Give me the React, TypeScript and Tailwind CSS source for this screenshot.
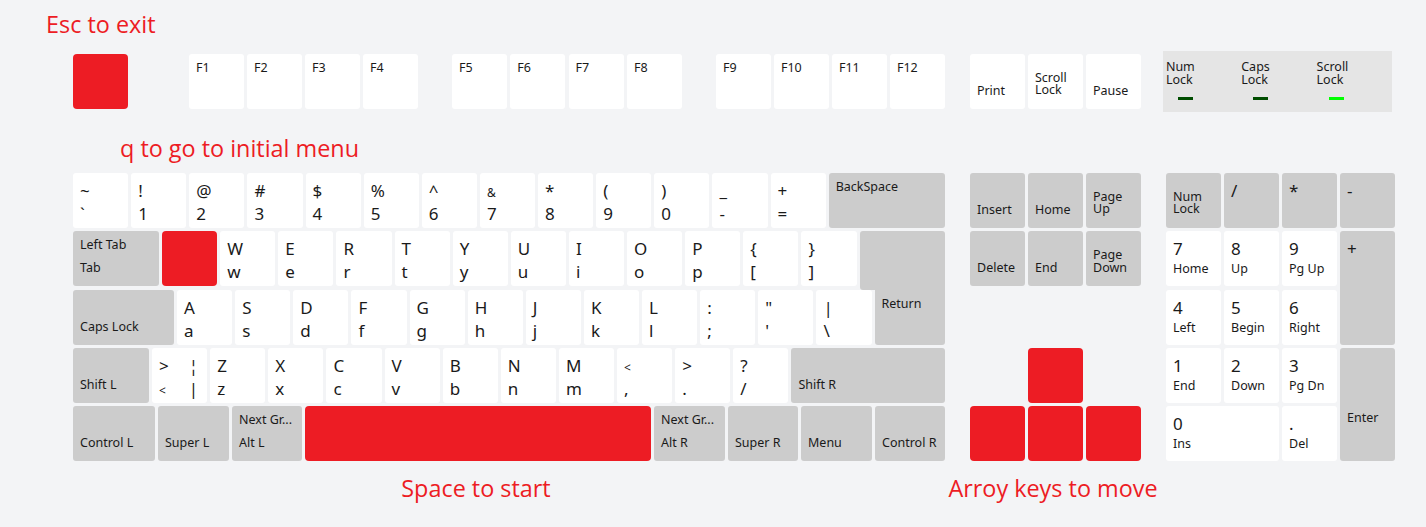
import * as React from "react";

const FONT = "font-['Noto_Sans',sans-serif]";
const WHITE = "rounded-[3px] bg-white";
const GRAY = "rounded-[3px] bg-[#cccccc]";
const RED = "rounded-[4px] bg-[#ed1c24]";

type KeyProps = {
  className?: string;
  children?: React.ReactNode;
};

const Key: React.FC<KeyProps> = ({ className = "", children }) => (
  <div className={`h-[55px] shrink-0 text-[#1a1a1a] ${className}`}>{children}</div>
);

// big two-line legend: shifted symbol on top, base on bottom
const Dual: React.FC<{ top: React.ReactNode; bottom: React.ReactNode }> = ({ top, bottom }) => (
  <div className="flex h-full flex-col justify-between pt-[9px] pb-[6px] pl-[7px] text-[17px] leading-[17px]">
    <span className="h-[17px]">{top}</span>
    <span className="h-[17px]">{bottom}</span>
  </div>
);

// small legends for modifiers
const Mod: React.FC<{ top?: string; bottom?: React.ReactNode }> = ({ top, bottom }) => (
  <div className="flex h-full flex-col justify-between pt-[8px] pb-[12px] pl-[7px] text-[12.5px] leading-[12px]">
    <span className="h-[12px] whitespace-nowrap">{top}</span>
    <span className="whitespace-nowrap">{bottom}</span>
  </div>
);

// numpad: big digit on top, small word below
const Pad: React.FC<{ top: string; bottom?: string }> = ({ top, bottom }) => (
  <div className="flex h-full flex-col justify-between pt-[9px] pb-[11px] pl-[7px]">
    <span className="text-[17px] leading-[17px]">{top}</span>
    <span className="text-[12.5px] leading-[12px]">{bottom}</span>
  </div>
);

const Two: React.FC<{ a: string; b: string }> = ({ a, b }) => (
  <span className="block leading-[12.7px]">
    {a}
    <br />
    {b}
  </span>
);

const Title: React.FC<{ children: React.ReactNode; className?: string }> = ({ children, className = "" }) => (
  <div className={`font-['Open_Sans',sans-serif] text-[23.4px] leading-[24px] whitespace-nowrap text-[#ed1c24] ${className}`}>
    {children}
  </div>
);

const U = "w-[55.13px]";

const numberRow: [React.ReactNode, string][] = [
  ["~", "`"],
  ["!", "1"],
  ["@", "2"],
  ["#", "3"],
  ["$", "4"],
  ["%", "5"],
  ["^", "6"],
  [<span className="text-[12px]">&amp;</span>, "7"],
  ["*", "8"],
  ["(", "9"],
  [")", "0"],
  ["_", "-"],
  ["+", "="],
];

const qRow: [string, string][] = [
  ["W", "w"],
  ["E", "e"],
  ["R", "r"],
  ["T", "t"],
  ["Y", "y"],
  ["U", "u"],
  ["I", "i"],
  ["O", "o"],
  ["P", "p"],
  ["{", "["],
  ["}", "]"],
];

const aRow: [string, string][] = [
  ["A", "a"],
  ["S", "s"],
  ["D", "d"],
  ["F", "f"],
  ["G", "g"],
  ["H", "h"],
  ["J", "j"],
  ["K", "k"],
  ["L", "l"],
  [":", ";"],
  ['"', "'"],
  ["|", "\\"],
];

const zRow: [React.ReactNode, string][] = [
  ["Z", "z"],
  ["X", "x"],
  ["C", "c"],
  ["V", "v"],
  ["B", "b"],
  ["N", "n"],
  ["M", "m"],
  [<span className="text-[12px]">&lt;</span>, ","],
  [">", "."],
  ["?", "/"],
];

const App: React.FC = () => {
  return (
    <div className={`h-[527px] w-[1426px] overflow-hidden bg-[#f3f4f6] ${FONT}`}>
      {/* hint */}
      <div className="h-[54px] pt-[12px] pl-[46px]">
        <Title>Esc to exit</Title>
      </div>

      {/* function row */}
      <div className="flex h-[55px] items-center pl-[73px]">
        <Key className={`w-[55px] ${RED}`} />
        <div className="ml-[61px] flex gap-[3px]">
          {["F1", "F2", "F3", "F4"].map((f) => (
            <Key key={f} className={`w-[55px] ${WHITE}`}>
              <Mod top={f} />
            </Key>
          ))}
        </div>
        <div className="ml-[34px] flex gap-[3.3px]">
          {["F5", "F6", "F7", "F8"].map((f) => (
            <Key key={f} className={`w-[55px] ${WHITE}`}>
              <Mod top={f} />
            </Key>
          ))}
        </div>
        <div className="ml-[34px] flex gap-[3px]">
          {["F9", "F10", "F11", "F12"].map((f) => (
            <Key key={f} className={`w-[55px] ${WHITE}`}>
              <Mod top={f} />
            </Key>
          ))}
        </div>
        <div className="ml-[25px] flex gap-[3px]">
          <Key className={`w-[55px] ${WHITE}`}>
            <Mod bottom="Print" />
          </Key>
          <Key className={`w-[55px] ${WHITE}`}>
            <Mod bottom={<Two a="Scroll" b="Lock" />} />
          </Key>
          <Key className={`w-[55px] ${WHITE}`}>
            <Mod bottom="Pause" />
          </Key>
        </div>
        <div className="ml-[22px] flex h-[61px] w-[229px] bg-[#e5e5e5] pt-[10px] pl-[3px] text-[12.5px] text-[#1a1a1a]">
          {[
            ["Num", "Lock", "bg-[#004d00]"],
            ["Caps", "Lock", "bg-[#004d00]"],
            ["Scroll", "Lock", "bg-[#00ff00]"],
          ].map(([a, b, c]) => (
            <div key={a} className="w-[76.5px]">
              <Two a={a} b={b} />
              <div className={`mt-[10.5px] ml-[12px] h-[3px] w-[15px] ${c}`} />
            </div>
          ))}
        </div>
      </div>

      {/* hint */}
      <div className="h-[64px] pt-[27px] pl-[120px]">
        <Title>q to go to initial menu</Title>
      </div>

      {/* keyboard body */}
      <div className="flex pl-[73px]">
        {/* main block */}
        <div className="flex w-[872px] flex-col gap-[3.25px]">
          <div className="flex gap-[3px]">
            {numberRow.map(([t, b], i) => (
              <Key key={i} className={`${U} ${WHITE}`}>
                <Dual top={t} bottom={b} />
              </Key>
            ))}
            <Key className={`w-[116px] ${GRAY}`}>
              <Mod top="BackSpace" />
            </Key>
          </div>

          <div className="flex items-start gap-[3px]">
            <Key className={`w-[86px] ${GRAY}`}>
              <Mod top="Left Tab" bottom="Tab" />
            </Key>
            <Key className={`${U} ${RED}`} />
            {qRow.map(([t, b]) => (
              <Key key={t} className={`${U} ${WHITE}`}>
                <Dual top={t} bottom={b} />
              </Key>
            ))}
            <div className="-mb-[3.25px] h-[58.25px] w-[85.4px] rounded-t-[3px] rounded-bl-[3px] bg-[#cccccc]" />
          </div>

          <div className="flex gap-[3px]">
            <Key className={`w-[101px] ${GRAY}`}>
              <Mod bottom="Caps Lock" />
            </Key>
            {aRow.map(([t, b]) => (
              <Key key={t} className={`${U} ${WHITE}`}>
                <Dual top={t} bottom={b} />
              </Key>
            ))}
            <Key className="w-[70.4px] rounded-b-[3px] bg-[#cccccc]">
              <Mod top="Return" />
            </Key>
          </div>

          <div className="flex gap-[3px]">
            <Key className={`w-[76px] ${GRAY}`}>
              <Mod bottom="Shift L" />
            </Key>
            <Key className={`${U} ${WHITE}`}>
              <div className="flex h-full gap-[13px]">
                <Dual top=">" bottom={<span className="text-[12px]">&lt;</span>} />
                <Dual top="¦" bottom="|" />
              </div>
            </Key>
            {zRow.map(([t, b], i) => (
              <Key key={i} className={`${U} ${WHITE}`}>
                <Dual top={t} bottom={b} />
              </Key>
            ))}
            <Key className={`w-[153.5px] ${GRAY}`}>
              <Mod bottom="Shift R" />
            </Key>
          </div>

          <div className="flex gap-[3px]">
            <Key className={`w-[82px] ${GRAY}`}>
              <Mod bottom="Control L" />
            </Key>
            <Key className={`w-[71px] ${GRAY}`}>
              <Mod bottom="Super L" />
            </Key>
            <Key className={`w-[70px] ${GRAY}`}>
              <Mod top="Next Gr..." bottom="Alt L" />
            </Key>
            <Key className={`w-[346px] ${RED}`} />
            <Key className={`w-[71px] ${GRAY}`}>
              <Mod top="Next Gr..." bottom="Alt R" />
            </Key>
            <Key className={`w-[70px] ${GRAY}`}>
              <Mod bottom="Super R" />
            </Key>
            <Key className={`w-[71px] ${GRAY}`}>
              <Mod bottom="Menu" />
            </Key>
            <Key className={`w-[70px] ${GRAY}`}>
              <Mod bottom="Control R" />
            </Key>
          </div>
        </div>

        {/* navigation + arrows */}
        <div className="ml-[25px] grid grid-cols-[repeat(3,55px)] grid-rows-[repeat(5,55px)] gap-x-[3px] gap-y-[3.25px]">
          <Key className={GRAY}>
            <Mod bottom="Insert" />
          </Key>
          <Key className={GRAY}>
            <Mod bottom="Home" />
          </Key>
          <Key className={GRAY}>
            <Mod bottom={<Two a="Page" b="Up" />} />
          </Key>
          <Key className={GRAY}>
            <Mod bottom="Delete" />
          </Key>
          <Key className={GRAY}>
            <Mod bottom="End" />
          </Key>
          <Key className={GRAY}>
            <Mod bottom={<Two a="Page" b="Down" />} />
          </Key>
          <Key className={`col-start-2 row-start-4 ${RED}`} />
          <Key className={`col-start-1 row-start-5 ${RED}`} />
          <Key className={`col-start-2 row-start-5 ${RED}`} />
          <Key className={`col-start-3 row-start-5 ${RED}`} />
        </div>

        {/* numpad */}
        <div className="ml-[25px] grid grid-cols-[repeat(4,55px)] grid-rows-[repeat(5,55px)] gap-x-[3px] gap-y-[3.25px]">
          <Key className={GRAY}>
            <Mod bottom={<Two a="Num" b="Lock" />} />
          </Key>
          <Key className={GRAY}>
            <Dual top="/" bottom="" />
          </Key>
          <Key className={GRAY}>
            <Dual top="*" bottom="" />
          </Key>
          <Key className={GRAY}>
            <Dual top="-" bottom="" />
          </Key>
          <Key className={WHITE}>
            <Pad top="7" bottom="Home" />
          </Key>
          <Key className={WHITE}>
            <Pad top="8" bottom="Up" />
          </Key>
          <Key className={WHITE}>
            <Pad top="9" bottom="Pg Up" />
          </Key>
          <div className={`row-span-2 text-[#1a1a1a] ${GRAY}`}>
            <div className="pt-[9px] pl-[7px] text-[17px] leading-[17px]">+</div>
          </div>
          <Key className={WHITE}>
            <Pad top="4" bottom="Left" />
          </Key>
          <Key className={WHITE}>
            <Pad top="5" bottom="Begin" />
          </Key>
          <Key className={WHITE}>
            <Pad top="6" bottom="Right" />
          </Key>
          <Key className={WHITE}>
            <Pad top="1" bottom="End" />
          </Key>
          <Key className={WHITE}>
            <Pad top="2" bottom="Down" />
          </Key>
          <Key className={WHITE}>
            <Pad top="3" bottom="Pg Dn" />
          </Key>
          <div className={`row-span-2 text-[#1a1a1a] ${GRAY}`}>
            <div className="pt-[64px] pl-[7px] text-[12.5px] leading-[12px]">Enter</div>
          </div>
          <Key className={`col-span-2 w-auto ${WHITE}`}>
            <Pad top="0" bottom="Ins" />
          </Key>
          <Key className={WHITE}>
            <Pad top="." bottom="Del" />
          </Key>
        </div>
      </div>

      {/* hints under the keyboard */}
      <div className="flex pt-[15px]">
        <div className="flex w-[476px] justify-end">
          <div className="flex w-0 justify-center">
            <Title>Space to start</Title>
          </div>
        </div>
        <div className="flex w-[577px] justify-end">
          <div className="flex w-0 justify-center">
            <Title>Arroy keys to move</Title>
          </div>
        </div>
      </div>
    </div>
  );
};

export default App;
